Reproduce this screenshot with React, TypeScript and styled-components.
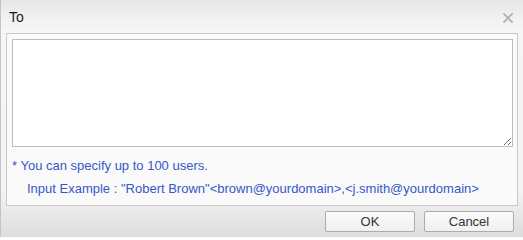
import React from "react";
import styled, { createGlobalStyle } from "styled-components";

const Global = createGlobalStyle`
  html, body { margin: 0; padding: 0; background: #ffffff; }
  body { font-family: Arial, "Liberation Sans", sans-serif; }
  * { box-sizing: border-box; }
`;

const Dialog = styled.div`
  width: 523px;
  height: 237px;
  border-left: 1px solid #c4c4c4;
  display: flex;
  flex-direction: column;
  background: linear-gradient(to bottom, #f6f6f6 0%, #f4f4f4 80%, #dcdcdc 100%);
  overflow: hidden;
`;

const TitleBar = styled.div`
  height: 33px;
  flex: none;
  display: flex;
  align-items: center;
  justify-content: space-between;
  padding: 0 9px 0 8px;
  background: linear-gradient(to bottom, #e6e6e6 0%, #f1f1f1 55%, #f7f7f7 100%);
`;

const Title = styled.span`
  font-family: Arial, "Liberation Sans", sans-serif;
  font-size: 14px;
  font-weight: normal;
  color: #1a1a1a;
  padding-top: 1px;
`;

const CloseButton = styled.button`
  border: 0;
  background: transparent;
  padding: 0;
  width: 12px;
  height: 12px;
  display: flex;
  align-items: center;
  justify-content: center;
  cursor: pointer;
  margin-top: 3px;
`;

const Panel = styled.div`
  margin: 0 5px 0 5px;
  border: 1px solid #c9c9c9;
  background: #fafafa;
  padding: 5px 4px 5px 5px;
  display: flex;
  flex-direction: column;
`;

const Input = styled.textarea`
  display: block;
  width: 100%;
  height: 108px;
  margin: 0;
  border: 1px solid #bdbdbd;
  background: #ffffff;
  font-family: Arial, "Liberation Sans", sans-serif;
  font-size: 12px;
  outline: none;
`;

const Notes = styled.div`
  margin-top: 7px;
  display: flex;
  flex-direction: column;
`;

const Note = styled.div<{ $indent?: number }>`
  font-family: Arial, "Liberation Sans", sans-serif;
  font-size: 13px;
  line-height: 23px;
  color: #3657c9;
  padding-left: ${(p) => p.$indent ?? 0}px;
  white-space: nowrap;
`;

const Footer = styled.div`
  flex: 1;
  display: flex;
  justify-content: flex-end;
  align-items: flex-start;
  gap: 9px;
  padding: 5px 9px 0 0;
`;

const Button = styled.button`
  width: 90px;
  height: 21px;
  border: 1px solid #ababab;
  border-radius: 2px;
  background: linear-gradient(to bottom, #fbfbfb 0%, #f0f0f0 100%);
  font-family: Arial, "Liberation Sans", sans-serif;
  font-size: 13px;
  color: #333333;
  padding: 0;
  cursor: pointer;
`;

export default function App() {
  return (
    <>
      <Global />
      <Dialog>
        <TitleBar>
          <Title>To</Title>
          <CloseButton aria-label="close">
            <svg width="10" height="10" viewBox="0 0 10 10">
              <path d="M1 1 L9 9 M9 1 L1 9" stroke="#b2b2b2" strokeWidth="1.8" strokeLinecap="square" />
            </svg>
          </CloseButton>
        </TitleBar>
        <Panel>
          <Input />
          <Notes>
            <Note>* You can specify up to 100 users.</Note>
            <Note $indent={15}>
              Input Example : "Robert Brown"&lt;brown@yourdomain&gt;,&lt;j.smith@yourdomain&gt;
            </Note>
          </Notes>
        </Panel>
        <Footer>
          <Button>OK</Button>
          <Button>Cancel</Button>
        </Footer>
      </Dialog>
    </>
  );
}
